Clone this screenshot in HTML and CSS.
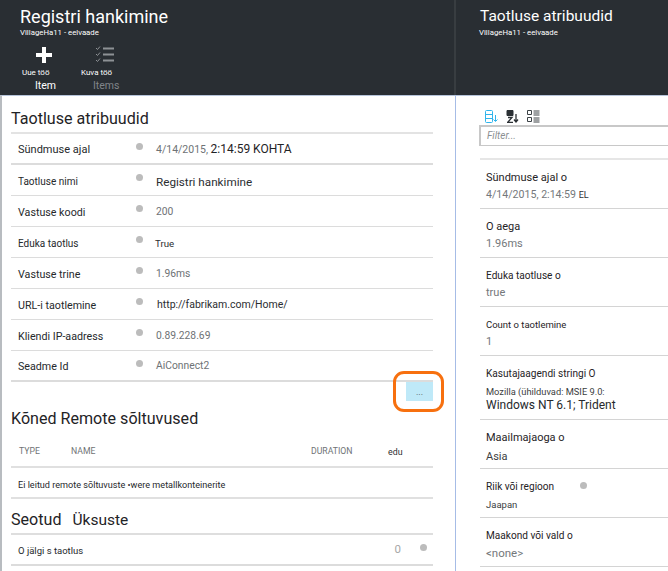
FILE: index.html
```html
<!DOCTYPE html>
<html lang="et">
<head>
<meta charset="utf-8">
<title>Registri hankimine</title>
<link rel="stylesheet" href="styles.css">
</head>
<body>
<div class="app">
  <section class="blade left">
    <header class="head head-left">
      <h1 class="title">Registri hankimine</h1>
      <div class="sub">VillageHa11 - eelvaade</div>
      <div class="tools">
        <div class="tool">
          <svg class="tool-icon" width="20" height="20" viewBox="0 0 20 20"><path d="M8 2h4v6h6v4h-6v6H8v-6H2V8h6z" fill="#fff"/></svg>
          <span class="tool-a">Uue töö</span>
          <span class="tool-b">Item</span>
        </div>
        <div class="tool tool-dim">
          <svg class="tool-icon" width="20" height="20" viewBox="0 0 20 20" fill="none" stroke="#8d9195"><path d="M1 3l1.500 1.500L5 1.500M1 9l1.500 1.500L5 7.500M1 15l1.500 1.500L5 13.500" stroke-width="1"/><path d="M8 3.500h11M8 9.500h11M8 15.500h11" stroke-width="2"/></svg>
          <span class="tool-a">Kuva töö</span>
          <span class="tool-b">Items</span>
        </div>
      </div>
    </header>
    <div class="body body-left">
      <h2 class="section first">Taotluse atribuudid</h2>
      <div class="list">
        <div class="row thick"><span class="label wide">Sündmuse ajal</span><i class="dot"></i><span class="value"><span class="date gray">4/14/2015,</span> <span class="big">2:14:59 KOHTA</span></span></div>
        <div class="row"><span class="label narrow">Taotluse nimi</span><i class="dot"></i><span class="value dark name-val">Registri hankimine</span></div>
        <div class="row"><span class="label">Vastuse koodi</span><i class="dot"></i><span class="value gray">200</span></div>
        <div class="row"><span class="label narrow">Eduka taotlus</span><i class="dot"></i><span class="value small dark">True</span></div>
        <div class="row"><span class="label">Vastuse trine</span><i class="dot"></i><span class="value gray">1.96ms</span></div>
        <div class="row"><span class="label">URL-i taotlemine</span><i class="dot"></i><span class="value dark url">http://fabrikam.com/Home/</span></div>
        <div class="row"><span class="label">Kliendi IP-aadress</span><i class="dot"></i><span class="value gray">0.89.228.69</span></div>
        <div class="row thick"><span class="label">Seadme Id</span><i class="dot"></i><span class="value gray">AiConnect2</span></div>
      </div>
      <div class="more-row">
        <div class="more">...<span class="ring"></span></div>
      </div>
      <h2 class="section second">Kõned Remote sõltuvused</h2>
      <div class="thead">
        <span class="th th-type">TYPE</span>
        <span class="th th-name">NAME</span>
        <span class="th th-dur">DURATION</span>
        <span class="th-edu">edu</span>
      </div>
      <div class="empty">Ei leitud remote sõltuvuste •were metallkonteinerite</div>
      <h2 class="section third">Seotud <span class="gap">Üksuste</span></h2>
      <div class="row thick related"><span class="label tiny-label grow">O jälgi s taotlus</span><span class="count">0</span><i class="dot"></i></div>
    </div>
  </section>
  <section class="blade right">
    <header class="head head-right">
      <h1 class="title title-right">Taotluse atribuudid</h1>
      <div class="sub">VillageHa11 - eelvaade</div>
    </header>
    <div class="body body-right">
      <div class="icons">
        <svg width="13" height="13" viewBox="0 0 13 13" fill="none" stroke="#2fb4ec"><path d="M.5 1.500a1 1 0 0 1 1-1h5a1 1 0 0 1 1 1v10a1 1 0 0 1-1 1h-5a1 1 0 0 1-1-1zM.5 4.500h7M.5 8.500h7M10.500 5v6M8.500 9.500l2 2 2-2"/></svg>
        <svg width="13" height="13" viewBox="0 0 13 13" fill="none" stroke="#2b3034"><path d="M1 .5h6v5H1z" fill="#2b3034"/><path d="M1 12.500h6M2 7.500h4L2 12M10 4v8M8 9.500l2 2.500 2-2.500" stroke-width="1.300"/></svg>
        <svg width="13" height="13" viewBox="0 0 13 13" fill="none" stroke="#3c4246"><path d="M.5.500h4v4h-4zM.5 7.500h4v4h-4zM6.500 1h6M6.500 3h6M6.500 5h6M6.500 8h6M6.500 10h6M6.500 12h6"/></svg>
      </div>
      <div class="filter">Filter...</div>
      <div class="props">
        <div class="prop"><div class="p-name">Sündmuse ajal o</div><div class="p-val date-val">4/14/2015, 2:14:59 <span class="tiny">EL</span></div></div>
        <div class="prop"><div class="p-name">O aega</div><div class="p-val">1.96ms</div></div>
        <div class="prop"><div class="p-name slim">Eduka taotluse o</div><div class="p-val">true</div></div>
        <div class="prop"><div class="p-name slimmer">Count o taotlemine</div><div class="p-val">1</div></div>
        <div class="prop prop-tall"><div class="p-name slim">Kasutajaagendi stringi O</div><div class="ua"><span class="ua-a">Mozilla (ühilduvad: MSIE 9.0:</span><span class="ua-b">Windows NT 6.1; Trident</span></div></div>
        <div class="prop"><div class="p-name">Maailmajaoga o</div><div class="p-val dark-val">Asia</div></div>
        <div class="prop"><div class="p-name with-dot slim">Riik või regioon<i class="dot"></i></div><div class="p-val tiny-val">Jaapan</div></div>
        <div class="prop"><div class="p-name slim">Maakond või vald o</div><div class="p-val none-val">&lt;none&gt;</div></div>
      </div>
    </div>
  </section>
</div>
</body>
</html>
```

FILE: styles.css
```css
* { box-sizing: border-box; }
html, body { margin: 0; padding: 0; background: #fff; }
body { font-family: "Roboto", "Liberation Sans", sans-serif; color: #1f2326; overflow: hidden; }
.app { display: grid; grid-template-columns: 455px 213px; width: 668px; height: 571px; overflow: hidden; }
.blade { display: flex; flex-direction: column; min-width: 0; height: 571px; }
.head { height: 95px; flex: none; background: #292e33; color: #fff; }
.head-left { padding: 5px 0 0 20px; }
.head-right { padding: 5px 0 0 24px; margin-left: -1px; border-left: 2px solid #383d41; }
.title { margin: 0; font-size: 18px; line-height: 24px; font-weight: 400; }
.title-right { font-size: 15.500px; line-height: 22px; }
.sub { font-size: 7.800px; line-height: 10px; margin-top: -1px; }
.head-right .sub { margin-top: 1px; margin-left: -1px; }
.tools { display: flex; margin-top: 7px; margin-left: 2px; }
.tool { width: 59px; display: flex; flex-direction: column; }
.tool-icon { margin-left: 12px; margin-bottom: 2px; }
.tool-a { font-size: 8px; line-height: 12px; }
.tool-b { font-size: 10.500px; line-height: 14px; margin-left: 13px; }
.tool-dim .tool-icon { margin-left: 14px; }
.tool-dim .tool-b { color: #80858a; margin-left: 12px; }
.body { flex: 1; min-height: 0; border-top: 1px solid #b6c4da; }
.body-left { padding: 0 22px 0 9px; border-left: 2px solid #b8bcc0; }
.section { margin: 0; font-size: 16.100px; font-weight: 400; color: #1f2326; line-height: 24px; }
.first { padding-top: 11px; height: 36px; }
.list { border-top: 2px solid #e3e3e3; }
.row { display: flex; align-items: center; height: 31px; border-bottom: 1px solid #dcdcdc; padding: 2px 0 0 7px; font-size: 11px; }
.thick { border-bottom-width: 2px; }
.label { width: 118px; flex: none; font-size: 10.700px; color: #26292c; }
.wide { font-size: 11px; }
.narrow { font-size: 10px; }
.tiny-label { font-size: 9.500px; }
.dot { width: 7px; height: 7px; border-radius: 50%; background: #bcbcbc; flex: none; display: inline-block; margin-top: -7px; }
.value { margin-left: 13px; margin-top: -2px; font-size: 10.300px; }
.gray { color: #6e7275; }
.dark { color: #2b2e31; }
.small { font-size: 9.700px; margin-left: 12px; margin-top: 1px; }
.date { font-size: 10.500px; }
.big { font-size: 12px; color: #1f2326; }
.name-val { font-size: 11.700px; margin-top: 2px; }
.url { margin-left: 14px; font-size: 10.500px; }
.more-row { display: flex; justify-content: flex-end; height: 19px; }
.more { width: 27px; height: 19px; background: #bfe9f8; position: relative; font-size: 9px; line-height: 20px; text-align: center; color: #555; }
.ring { position: absolute; left: -13px; top: -11px; width: 51px; height: 41px; border: 3px solid #f7700f; border-radius: 11px; }
.second { margin-top: 6px; height: 26px; }
.thead { display: flex; align-items: center; height: 35px; border-bottom: 2px solid #e0e0e0; padding-left: 8px; padding-top: 3px; }
.th { font-size: 8.700px; color: #6f7376; }
.th-type { width: 52px; }
.th-name { width: 240px; }
.th-dur { width: 77px; }
.th-edu { font-size: 8.800px; color: #2b2e31; margin-top: 2px; }
.empty { display: flex; align-items: center; height: 31px; border-bottom: 2px solid #e0e0e0; padding: 4px 0 0 7px; font-size: 9.100px; color: #26292c; }
.third { margin-top: 6px; padding-top: 3px; height: 30px; border-bottom: 2px solid #dedede; }
.gap { margin-left: 7px; font-size: 15.500px; }
.related { height: 31px; padding-right: 6px; }
.grow { flex: 1; width: auto; }
.count { color: #a7a7a7; font-size: 11.500px; margin-right: 19px; margin-top: -3px; }
.body-right { border-left: 1px solid #a6bce6; padding: 0 0 0 24px; }
.icons { display: flex; gap: 8px; padding: 14px 0 0 5px; height: 29px; align-items: flex-start; }
.filter { height: 21px; border: 1px solid #c8c8c8; border-width: 2px 0 1px 2px; font-size: 10px; font-style: italic; color: #8b8f92; line-height: 18px; padding-left: 6px; margin-left: -1px; }
.props { margin-top: 12px; border-top: 2px solid #e6e6e6; }
.prop { height: 49px; border-bottom: 1px solid #d4d4d4; padding: 10px 0 0 6px; }
.prop-tall { height: 64px; }
.p-name { font-size: 11px; line-height: 16px; color: #1f2326; }
.slim { font-size: 10.100px; }
.slimmer { font-size: 9.500px; }
.p-val { font-size: 11px; line-height: 16px; margin-top: 1px; color: #74787b; }
.date-val { font-size: 10.600px; }
.tiny { font-size: 9px; color: #333; }
.ua { margin-top: 3px; }
.ua-a { display: block; font-size: 9.300px; line-height: 13px; color: #3b3e41; }
.ua-b { display: block; font-size: 12px; line-height: 15px; color: #26292c; white-space: nowrap; }
.dark-val { color: #3b3e41; margin-top: 3px; }
.tiny-val { font-size: 9.500px; color: #3b3e41; margin-top: 2px; }
.none-val { font-size: 11.500px; }
.with-dot { display: flex; align-items: center; }
.with-dot .dot { margin: -3px 0 0 26px; }
```
